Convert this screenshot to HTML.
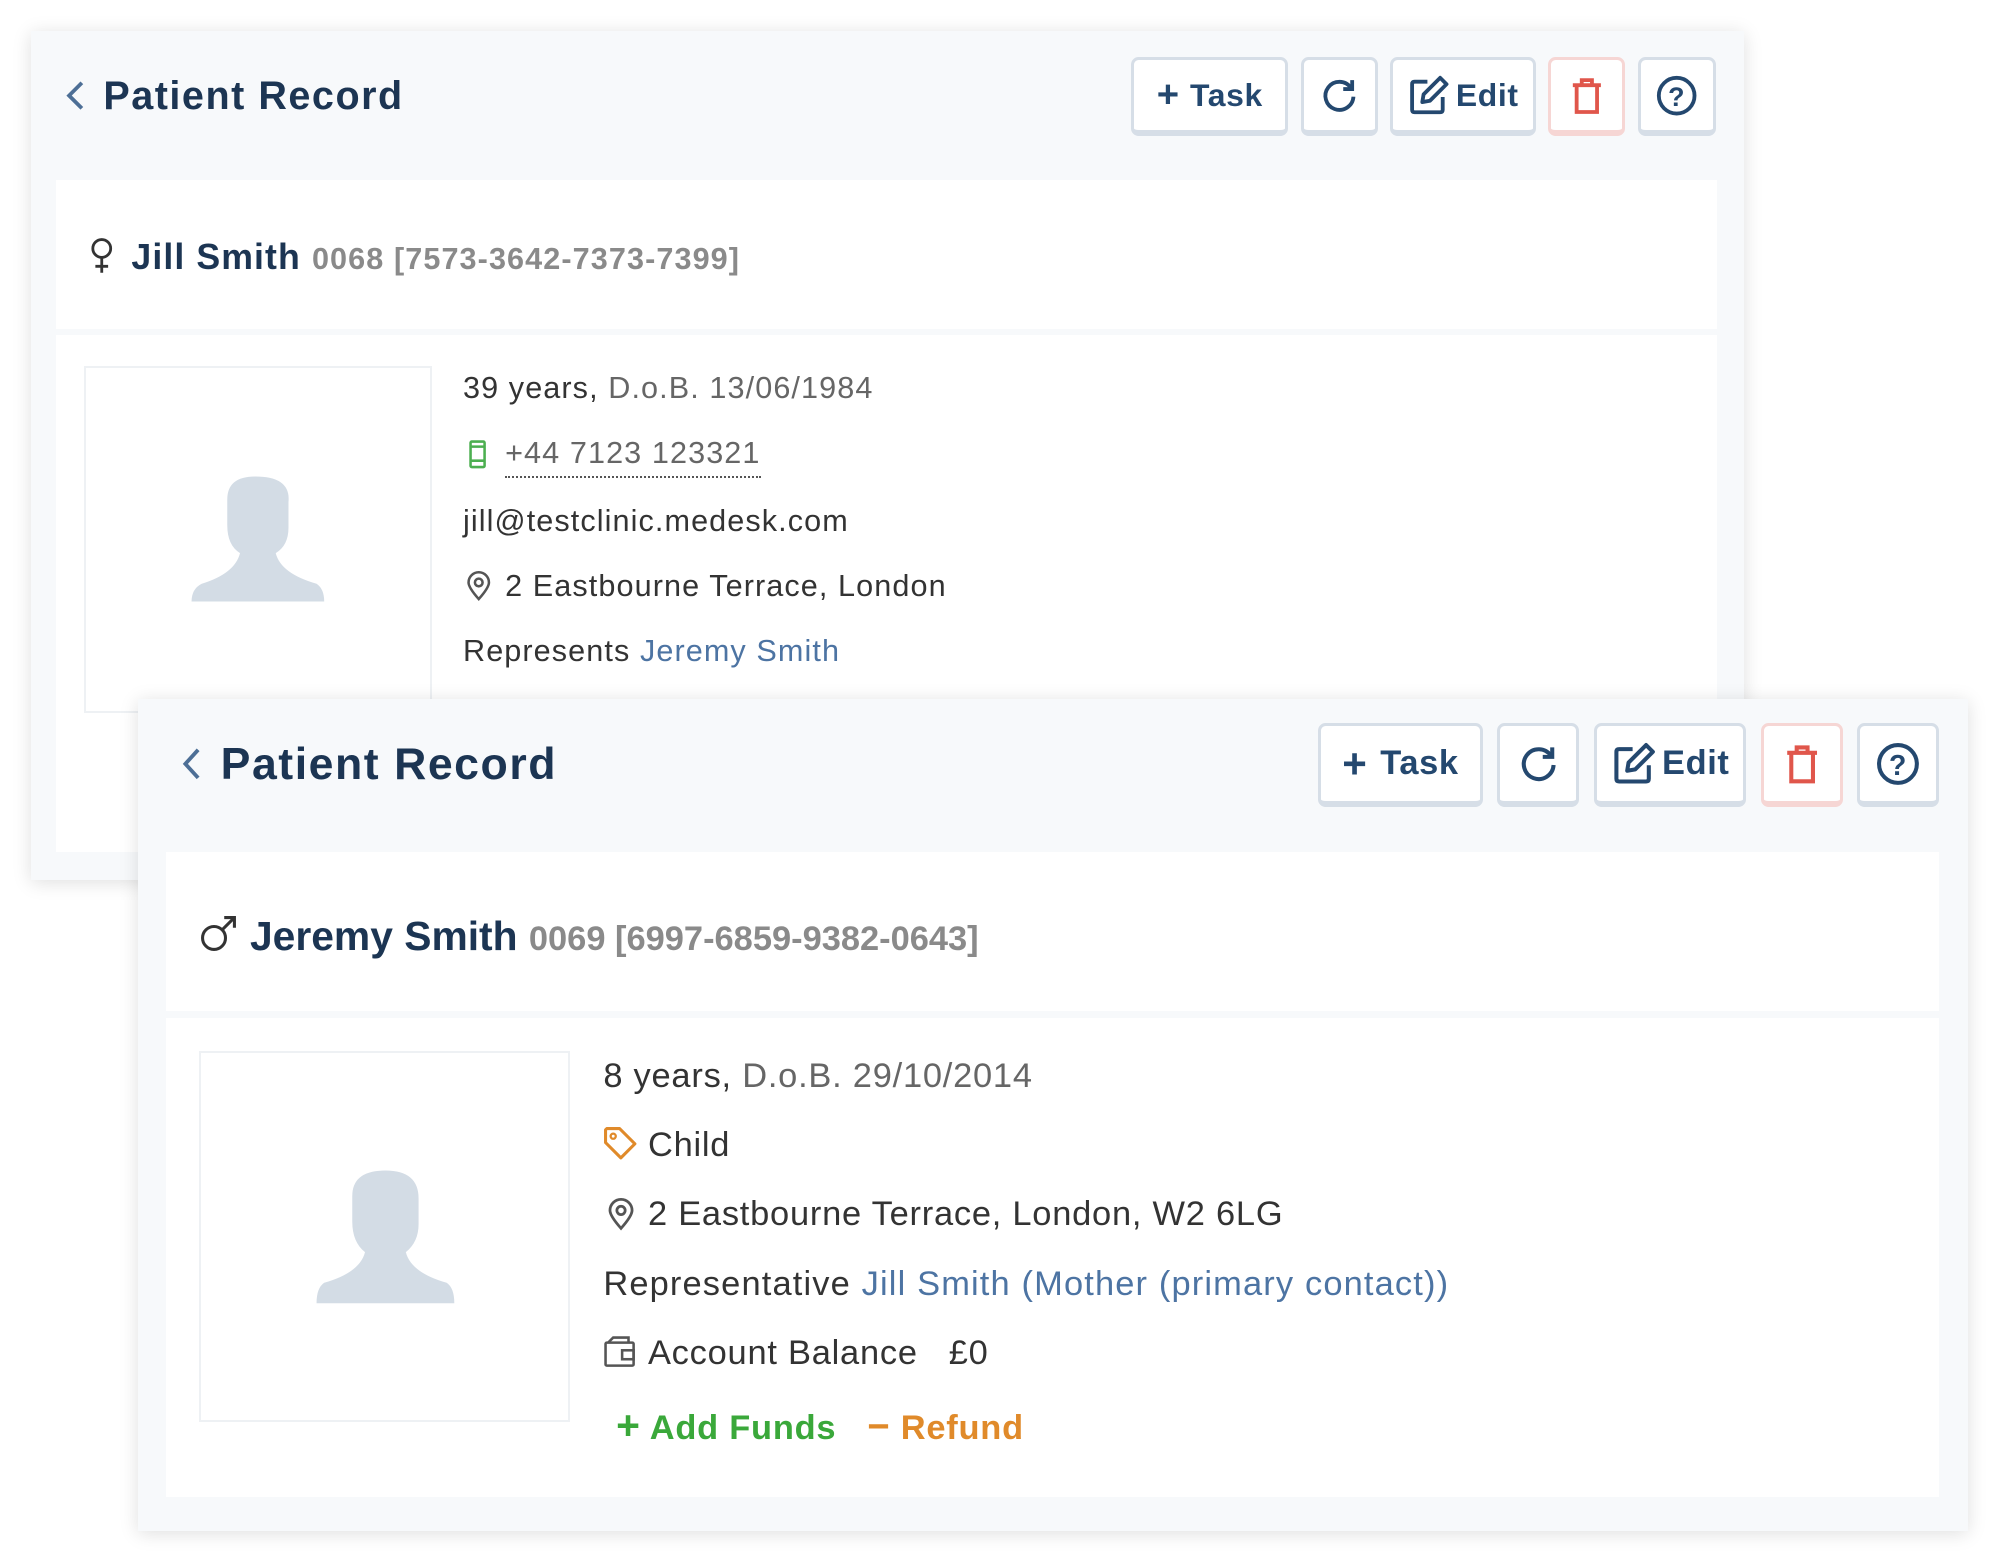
<!DOCTYPE html>
<html><head><meta charset="utf-8"><style>
html,body{margin:0;padding:0;background:#fff;overflow:hidden}
body{width:2000px;height:1563px}
#w{zoom:1.27551;width:1568px;height:1226px;position:relative;font-family:"Liberation Sans",sans-serif}
.a{position:absolute}
.card{position:absolute;background:#f7f9fb;box-shadow:0 2px 14px rgba(0,0,0,.13)}
.pan{position:absolute;background:#fff}
.btn{position:absolute;box-sizing:border-box;background:#fff;border:3px solid #d6dee7;border-bottom-width:5px;border-radius:6px;display:flex;align-items:center;justify-content:center;color:#24486f;font-weight:bold;letter-spacing:0.5px}
.title{position:absolute;font-weight:bold;color:#1c3553;white-space:nowrap;letter-spacing:1.2px}
.ln{position:absolute;white-space:nowrap;color:#333}
.c1{letter-spacing:0.85px}
.c2{letter-spacing:0.6px}
.g{color:#666}
.lk{color:#4d74a3}
.photo{position:absolute;box-sizing:border-box;border:2px solid #eef1f4;background:#fff}
</style></head><body><div id="w">

<!-- CARD 1 -->
<div class="card" style="left:24px;top:24px;width:1343px;height:666px"></div>
<svg class="a" style="left:50px;top:62px" width="18" height="26" viewBox="0 0 18 26"><path d="M14 3 L4 13 L14 23" fill="none" stroke="#4d6f96" stroke-width="3"/></svg>
<div class="title" style="left:81px;top:58px;font-size:31px">Patient Record</div>
<div class="btn" style="left:887px;top:45px;width:123px;height:62px;font-size:25px"><span style="font-size:30px;margin-right:8px">+</span>Task</div>
<div class="btn" style="left:1020px;top:45px;width:60px;height:62px"><svg width="32" height="32" viewBox="0 0 32 32"><path d="M25 10 A11 11 0 1 0 27 17" fill="none" stroke="#24486f" stroke-width="3"/><path d="M26 4 V11 H19" fill="none" stroke="#24486f" stroke-width="3"/></svg></div>
<div class="btn" style="left:1090px;top:45px;width:114px;height:62px;font-size:25px"><svg width="34" height="34" viewBox="0 0 34 34" style="margin-right:4px"><path d="M16 6 H6 Q4 6 4 8 V28 Q4 30 6 30 H26 Q28 30 28 28 V18" fill="none" stroke="#24486f" stroke-width="3"/><path d="M26 3 L31 8 L18 21 L12 22 L13 16 Z" fill="none" stroke="#24486f" stroke-width="3" stroke-linejoin="round"/></svg>Edit</div>
<div class="btn" style="left:1214px;top:45px;width:60px;height:62px;border-color:#f6d6d4"><svg width="28" height="32" viewBox="0 0 28 32"><path d="M3 8 H25 M10 8 V4 H18 V8 M6 8 V29 H22 V8" fill="none" stroke="#e0564b" stroke-width="3"/></svg></div>
<div class="btn" style="left:1284px;top:45px;width:61px;height:62px"><svg width="34" height="34" viewBox="0 0 34 34"><circle cx="17" cy="17" r="14" fill="none" stroke="#24486f" stroke-width="3"/><text x="17" y="25" text-anchor="middle" font-family="Liberation Sans" font-weight="bold" font-size="21" fill="#24486f">?</text></svg></div>

<div class="pan" style="left:44px;top:141px;width:1302px;height:117px"></div>
<svg class="a" style="left:70px;top:186px" width="20" height="30" viewBox="0 0 20 30"><circle cx="10" cy="9" r="7" fill="none" stroke="#333" stroke-width="2.2"/><path d="M10 16 V28 M5 23 H15" stroke="#333" stroke-width="2.2"/></svg>
<div class="ln c1" style="left:103px;top:186px;font-size:28px;font-weight:bold;color:#1c3553">Jill Smith <span style="color:#8a8a8a;font-size:24px">0068 [7573-3642-7373-7399]</span></div>

<div class="pan" style="left:44px;top:263px;width:1302px;height:405px"></div>
<div class="photo" style="left:66px;top:287px;width:273px;height:272px"></div>
<svg class="a" style="left:148px;top:372px" width="108" height="100" viewBox="0 0 108 100"><path d="M40 62 Q30 56 30 40 V20 Q30 2 52 2 Q80 2 78 22 V42 Q78 56 68 62 Q72 78 100 86 Q106 90 106 100 H2 Q2 90 10 86 Q36 78 40 62 Z" fill="#d3dce5"/></svg>
<div class="ln c1" style="left:363px;top:291px;font-size:24px">39 years, <span class="g">D.o.B. 13/06/1984</span></div>
<svg class="a" style="left:367px;top:344px" width="16" height="24" viewBox="0 0 16 24"><rect x="2" y="2" width="11" height="20" rx="1" fill="none" stroke="#4caf50" stroke-width="2"/><path d="M2 6 H13 M2 17 H13" stroke="#4caf50" stroke-width="2"/></svg>
<div class="ln g c1" style="left:396px;top:342px;font-size:24px;border-bottom:2px dotted #555;padding-bottom:4px">+44 7123 123321</div>
<div class="ln c1" style="left:363px;top:395px;font-size:24px">jill@testclinic.medesk.com</div>
<svg class="a" style="left:365px;top:448px" width="20" height="24" viewBox="0 0 20 24"><path d="M10 22 Q2 13 2 9 A8 8 0 0 1 18 9 Q18 13 10 22 Z" fill="none" stroke="#555" stroke-width="2"/><circle cx="10" cy="9" r="3" fill="none" stroke="#555" stroke-width="2"/></svg>
<div class="ln c1" style="left:396px;top:446px;font-size:24px">2 Eastbourne Terrace, London</div>
<div class="ln c1" style="left:363px;top:497px;font-size:24px">Represents <span class="lk">Jeremy Smith</span></div>

<!-- CARD 2 -->
<div class="card" style="left:108px;top:548px;width:1435px;height:652px"></div>
<svg class="a" style="left:140px;top:585px" width="20" height="28" viewBox="0 0 20 28"><path d="M15 3 L5 14 L15 25" fill="none" stroke="#4d6f96" stroke-width="3"/></svg>
<div class="title" style="left:173px;top:580px;font-size:35px">Patient Record</div>
<div class="btn" style="left:1033px;top:567px;width:130px;height:66px;font-size:27px"><span style="font-size:33px;margin-right:10px">+</span>Task</div>
<div class="btn" style="left:1174px;top:567px;width:64px;height:66px"><svg width="34" height="34" viewBox="0 0 32 32"><path d="M25 10 A11 11 0 1 0 27 17" fill="none" stroke="#24486f" stroke-width="3"/><path d="M26 4 V11 H19" fill="none" stroke="#24486f" stroke-width="3"/></svg></div>
<div class="btn" style="left:1250px;top:567px;width:119px;height:66px;font-size:27px"><svg width="36" height="36" viewBox="0 0 34 34" style="margin-right:4px"><path d="M16 6 H6 Q4 6 4 8 V28 Q4 30 6 30 H26 Q28 30 28 28 V18" fill="none" stroke="#24486f" stroke-width="3"/><path d="M26 3 L31 8 L18 21 L12 22 L13 16 Z" fill="none" stroke="#24486f" stroke-width="3" stroke-linejoin="round"/></svg>Edit</div>
<div class="btn" style="left:1381px;top:567px;width:64px;height:66px;border-color:#f6d6d4"><svg width="30" height="34" viewBox="0 0 28 32"><path d="M3 8 H25 M10 8 V4 H18 V8 M6 8 V29 H22 V8" fill="none" stroke="#e0564b" stroke-width="3"/></svg></div>
<div class="btn" style="left:1456px;top:567px;width:64px;height:66px"><svg width="36" height="36" viewBox="0 0 34 34"><circle cx="17" cy="17" r="14" fill="none" stroke="#24486f" stroke-width="3"/><text x="17" y="25" text-anchor="middle" font-family="Liberation Sans" font-weight="bold" font-size="21" fill="#24486f">?</text></svg></div>

<div class="pan" style="left:130px;top:668px;width:1390px;height:125px"></div>
<svg class="a" style="left:157px;top:717px" width="30" height="30" viewBox="0 0 30 30"><circle cx="11" cy="18" r="9" fill="none" stroke="#333" stroke-width="2.4"/><path d="M17 12 L27 2 M19 2 H27 V10" fill="none" stroke="#333" stroke-width="2.4"/></svg>
<div class="ln" style="left:196px;top:716px;font-size:32px;font-weight:bold;color:#1c3553">Jeremy Smith <span style="color:#8a8a8a;font-size:27px">0069 [6997-6859-9382-0643]</span></div>

<div class="pan" style="left:130px;top:798px;width:1390px;height:376px"></div>
<div class="photo" style="left:156px;top:824px;width:291px;height:291px"></div>
<svg class="a" style="left:246px;top:916px" width="112" height="106" viewBox="0 0 112 106"><path d="M40 66 Q30 58 30 42 V22 Q30 2 56 2 Q82 2 82 24 V44 Q82 58 72 66 Q76 82 104 90 Q110 94 110 106 H2 Q2 94 8 90 Q36 82 40 66 Z" fill="#d3dce5"/></svg>
<div class="ln c2" style="left:473px;top:829px;font-size:27px">8 years, <span class="g">D.o.B. 29/10/2014</span></div>
<svg class="a" style="left:473px;top:883px" width="28" height="28" viewBox="0 0 28 28"><path d="M2 3 V13 L14 25 L25 14 L13 2 H3 Z" fill="none" stroke="#e08a2a" stroke-width="2.4" stroke-linejoin="round"/><circle cx="8" cy="8" r="2" fill="none" stroke="#e08a2a" stroke-width="1.8"/></svg>
<div class="ln c2" style="left:508px;top:883px;font-size:27px">Child</div>
<svg class="a" style="left:476px;top:939px" width="22" height="26" viewBox="0 0 20 24"><path d="M10 22 Q2 13 2 9 A8 8 0 0 1 18 9 Q18 13 10 22 Z" fill="none" stroke="#555" stroke-width="2"/><circle cx="10" cy="9" r="3" fill="none" stroke="#555" stroke-width="2"/></svg>
<div class="ln c2" style="left:508px;top:937px;font-size:27px">2 Eastbourne Terrace, London, W2 6LG</div>
<div class="ln" style="left:473px;top:992px;font-size:27px;letter-spacing:0.9px">Representative <span class="lk">Jill Smith (Mother (primary contact))</span></div>
<svg class="a" style="left:473px;top:1047px" width="26" height="26" viewBox="0 0 26 26"><rect x="2" y="6" width="22" height="18" rx="1" fill="none" stroke="#555" stroke-width="2"/><path d="M4 6 L8 2 H20 V6" fill="none" stroke="#555" stroke-width="2"/><rect x="15" y="12" width="9" height="7" fill="none" stroke="#555" stroke-width="2"/></svg>
<div class="ln c2" style="left:508px;top:1046px;font-size:27px">Account Balance &nbsp;&nbsp;£0</div>
<div class="ln" style="left:483px;top:1099px;font-size:27px;font-weight:bold;color:#3aa83a;letter-spacing:0.6px"><span style="font-size:32px">+</span> Add Funds &nbsp;&nbsp;<span style="color:#e08a2a"><span style="font-size:30px">−</span> Refund</span></div>

</div></body></html>
